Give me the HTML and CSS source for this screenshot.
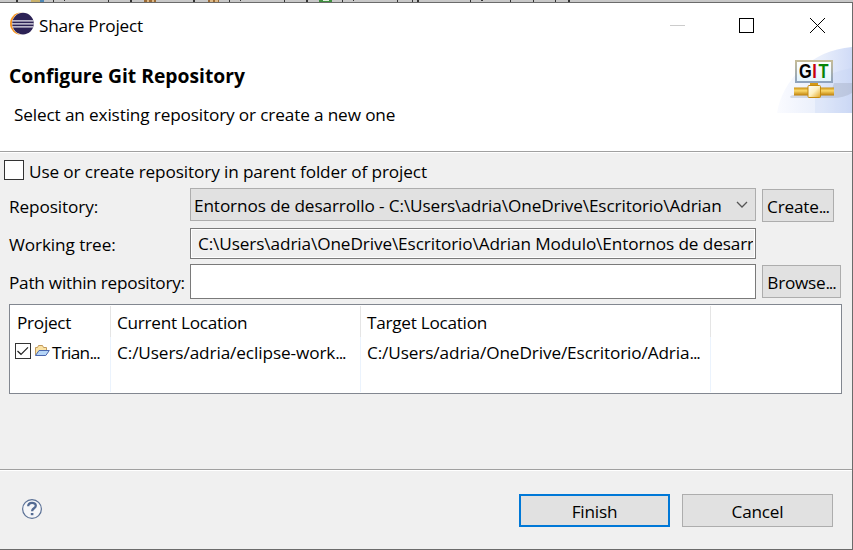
FILE: index.html
```
<!DOCTYPE html>
<html lang="en">
<head>
<meta charset="utf-8">
<title>Share Project</title>
<link rel="stylesheet" href="styles.css">
</head>
<body>
<div class="backdrop">
  <svg class="strip" width="853" height="2" viewBox="0 0 853 2" shape-rendering="crispEdges">
    <path fill="#333" d="M16 0h2v2h-2zM53 0h1v2h-1zM64 0h1v1h-1zM108 0h1v2h-1zM130 0h2v2h-2zM193 0h2v2h-2zM229 0h1v2h-1zM240 0h1v1h-1zM284 0h1v2h-1zM306 0h2v2h-2zM342 0h1v2h-1zM353 0h1v1h-1zM397 0h1v2h-1zM412 0h1v2h-1zM417 0h2v2h-2zM470 0h1v2h-1zM481 0h2v1h-2zM510 0h1v2h-1zM533 0h1v2h-1zM555 0h1v2h-1zM568 0h2v2h-2z"/>
    <path fill="#c9b16b" d="M31 0h9v2h-9z"/><path fill="#4d87b5" d="M40 0h4v2h-4z"/>
    <path fill="#9b6b35" d="M144 0h12v2h-12zM208 0h11v2h-11z"/><path fill="#ddb987" d="M147 0h2v2h-2zM152 0h2v2h-2zM210 0h3v2h-3zM215 0h3v2h-3z"/>
    <path fill="#3f8f3f" d="M319 0h13v2h-13z"/><path fill="#dfeedd" d="M323 0h6v1h-6z"/>
  </svg>
  <main class="dialog">
    <header class="titlebar">
      <svg class="app-icon" width="26" height="24" viewBox="0 0 26 24">
        <circle cx="12" cy="11.6" r="11" fill="#f7941e"/>
        <circle cx="14.6" cy="11.6" r="11.6" fill="#fff"/>
        <circle cx="14" cy="11.6" r="10.8" fill="#2c2255"/>
        <path d="M3.3 8.8h21.2M2.8 11.8h22M3.3 14.8h21.2" stroke="#e9e7f0" stroke-width="1.2"/>
      </svg>
      <span class="title t-title">Share Project</span>
      <svg class="win-controls" width="160" height="20" viewBox="0 0 160 20" fill="none" shape-rendering="crispEdges">
        <path d="M0 9.5h15" stroke="#ccc"/>
        <rect x="69.5" y="2.5" width="14" height="14" stroke="#000"/>
        <path d="M140 2l15 15M155 2l-15 15" stroke="#000" shape-rendering="auto"/>
      </svg>
    </header>
    <section class="banner">
      <div class="banner-text">
        <h1>Configure Git Repository</h1>
        <p class="t-sub">Select an existing repository or create a new one</p>
      </div>
      <svg class="git-art" width="75" height="66" viewBox="0 0 75 66">
        <defs>
          <linearGradient id="sky"><stop offset="0" stop-color="#fafbff"/><stop offset=".6" stop-color="#e8eefb"/><stop offset="1" stop-color="#d0dbf7"/></linearGradient>
          <linearGradient id="gold" x2="0" y2="1"><stop offset="0" stop-color="#c98f10"/><stop offset=".4" stop-color="#fbd86a"/><stop offset="1" stop-color="#bd7d05"/></linearGradient>
          <linearGradient id="hub" x2="1" y2="1"><stop offset="0" stop-color="#fff"/><stop offset=".5" stop-color="#fdf0c0"/><stop offset="1" stop-color="#e2a21c"/></linearGradient>
          <linearGradient id="frame" x2="0" y2="1"><stop offset="0" stop-color="#c4bb98"/><stop offset="1" stop-color="#8fa3be"/></linearGradient>
          <linearGradient id="screen" x2="0" y2="1"><stop offset="0" stop-color="#fff"/><stop offset="1" stop-color="#e2f4fd"/></linearGradient>
        </defs>
        <path d="M0 66C5 34 34 3 75 0V66z" fill="url(#sky)"/>
        <path d="M38 36C48 28 60 24 75 21V66H38z" fill="#bccbf0" opacity=".22"/>
        <path d="M57 36h18v10q-8 5-20 5H14q-3-2 3-3h36z" fill="#9aa3b8" opacity=".35"/>
        <rect x="19" y="14" width="36" height="21" fill="url(#screen)" stroke="url(#frame)" stroke-width="2"/>
        <text class="git-letters" y="31.3" transform="scale(.78 1)"><tspan x="28.2" fill="#000">G</tspan><tspan x="45.1" fill="#c8000c">I</tspan><tspan x="53.1" fill="#078407">T</tspan></text>
        <path d="M33 36h8v4h-8z" fill="#d69a16"/>
        <path d="M17 40.5h40v8h-40z" fill="url(#gold)"/>
        <rect x="31" y="38.5" width="12.5" height="12" rx="1" fill="url(#hub)" stroke="#c58a10"/>
      </svg>
    </section>
    <section class="content">
      <label class="parent-row"><span class="box"></span><span class="t-use">Use or create repository in parent folder of project</span></label>
      <div class="form">
        <span class="label t-repo">Repository:</span>
        <div class="combo"><span class="t-combo">Entornos de desarrollo - C:\Users\adria\OneDrive\Escritorio\Adrian</span>
          <svg width="12" height="8" viewBox="0 0 12 8"><path d="M1 1l5 5 5-5" fill="none" stroke="#555" stroke-width="1.3"/></svg>
        </div>
        <div class="button create"><span>Create<span class="dots">...</span></span></div>
        <span class="label t-tree">Working tree:</span>
        <div class="readonly"><div class="clip t-path">C:\Users\adria\OneDrive\Escritorio\Adrian Modulo\Entornos de desarr</div></div>
        <span></span>
        <span class="label within">Path within repository:</span>
        <div class="input"></div>
        <div class="button browse"><span>Browse<span class="dots">...</span></span></div>
      </div>
      <div class="table">
        <div class="th">Project</div>
        <div class="th">Current Location</div>
        <div class="th">Target Location</div>
        <div class="rest"></div>
        <div class="td first">
          <svg width="16" height="16" viewBox="0 0 16 16" fill="none"><rect x=".5" y=".5" width="15" height="15" fill="#fff" stroke="#333"/><path d="M2.5 8l3.5 3.3 7-7" stroke="#222" stroke-width="1.2"/></svg>
          <svg class="folder" width="16" height="13" viewBox="0 0 16 13"><path d="M1.5 11V3.5h2l1-2h4l1 2h3v3" fill="#fbe3a4" stroke="#c29a5c"/><path d="M1.5 11.5L5 6.5h10.3l-3.5 5z" fill="#b5d5f7" stroke="#4a66ae"/></svg>
          <span class="t-tri">Trian<span class="dots">...</span></span>
        </div>
        <div class="td t-c1">C:/Users/adria/eclipse-work<span class="dots">...</span></div>
        <div class="td t-c2">C:/Users/adria/OneDrive/Escritorio/Adria<span class="dots">...</span></div>
        <div class="rest"></div>
      </div>
    </section>
    <footer class="footer">
      <svg class="help" width="22" height="22" viewBox="0 0 22 22" fill="none"><circle cx="11" cy="11" r="9.4" fill="#f5f6f8" stroke="#5b7196" stroke-width="1.2"/><path d="M7.2 8.3C7.2 3.8 14.8 3.8 14.8 7.7C14.8 10.4 11.1 10.2 11.1 13.3" stroke="#536b93" stroke-width="2.3"/><path d="M9.8 15h2.6v2.2H9.8z" fill="#536b93"/></svg>
      <div class="button big primary"><span class="t-fin">Finish</span></div>
      <div class="button big"><span class="t-fin">Cancel</span></div>
    </footer>
  </main>
</div>
</body>
</html>
```
FILE: styles.css
```
* { box-sizing: border-box; }
body { margin: 0; overflow: hidden; font-family: "Open Sans", "Noto Sans", sans-serif; font-size: 17.2px; line-height: 24px; color: #000; }
.backdrop { width: 853px; height: 550px; background: #c8c8c8; display: flex; flex-direction: column; }
.strip { display: block; flex: none; }
.dialog { height: 548px; background: #f0f0f0; border: solid #6b6b6b; border-width: 1px 1px 1px 0; display: flex; flex-direction: column; }
.titlebar { height: 44px; background: #fff; display: flex; align-items: flex-start; padding: 9px 22px 0 9px; }
.title { margin: 2px 0 0 4px; flex: 1; }
.win-controls { margin: 4px 0 0; }
.banner { height: 105px; background: #fff; border-bottom: 1px solid #a0a0a0; box-shadow: 0 1px #fff; display: flex; justify-content: space-between; }
.banner-text { padding: 17px 0 0 9px; }
h1 { margin: 0 0 15px; font-size: 19.3px; line-height: 24px; font-weight: 700; }
p { margin: 0 0 0 5px; }
.git-letters { font-family: "Liberation Sans", sans-serif; font-weight: 700; font-size: 21px; }
.content { height: 318px; padding: 8px 10px 0 9px; border-bottom: 1px solid #a0a0a0; box-shadow: 0 1px #fff; }
.parent-row { display: flex; margin-left: -5px; height: 28px; gap: 5px; }
.box { width: 20px; height: 20px; background: #fff; border: 1px solid #333; flex: none; }
.form { display: grid; grid-template-columns: 175px 566px auto; column-gap: 6px; grid-template-rows: 38px 37px 38px; height: 116px; }
.label { margin-top: 7px; white-space: nowrap; }
.within { margin-top: 8px; letter-spacing: -.24px; }
.combo { height: 33px; background: #e1e1e1; border: 1px solid #adadad; display: flex; justify-content: space-between; padding: 5px 7px 0 3px; white-space: nowrap; }
.combo svg { margin-top: 7px; }
.button { height: 33px; background: #e1e1e1; border: 1px solid #adadad; display: flex; justify-content: center; padding-top: 5px; margin-top: 1px; }
.create { width: 72px; letter-spacing: -.2px; }
.browse { width: 79px; margin-top: 2px; letter-spacing: -.25px; }
.readonly { height: 31px; margin-top: 2px; border: 1px solid #7a7a7a; box-shadow: inset 0 0 0 1px #fff; padding: 3px 2px 0 7px; }
.clip { overflow: hidden; white-space: nowrap; }
.input { height: 35px; margin-top: 1px; border: 1px solid #7a7a7a; background: #fff; }
.table { width: 833px; height: 90px; background: #fff; border: 1px solid #828790; padding: 1px; display: grid; grid-template-columns: 100px 250px 350px 1fr; grid-template-rows: 31px 55px; }
.th, .td { border-right: 1px solid #e5e5e5; padding: 5px 0 0 6px; overflow: hidden; white-space: nowrap; }
.th { letter-spacing: -.27px; }
.td { border-right-color: #ebf3fd; padding-top: 4px; }
.first { display: flex; gap: 3px; padding-left: 4px; }
.first svg { margin-top: 2px; flex: none; }
.first .folder { margin-top: 3px; }
.footer { flex: 1; display: flex; padding: 23px 19px 0 21px; gap: 12px; }
.help { margin: 5px auto 0 0; }
.big { width: 151px; }
.primary { border: 2px solid #0078d7; padding-top: 4px; }
.t-title { letter-spacing: -.22px; }
.t-sub { letter-spacing: -.14px; }
.t-use { letter-spacing: -.12px; }
.t-repo { letter-spacing: -.1px; }
.t-tree { letter-spacing: -.1px; }
.t-combo { letter-spacing: -.11px; }
.t-path { letter-spacing: -.11px; }
.t-tri { letter-spacing: -.7px; margin-left: -1px; }
.t-c1 { letter-spacing: -.1px; }
.t-c2 { letter-spacing: -.11px; }
.t-fin { letter-spacing: -.2px; }
.dots { letter-spacing: -1.1px; }
```
